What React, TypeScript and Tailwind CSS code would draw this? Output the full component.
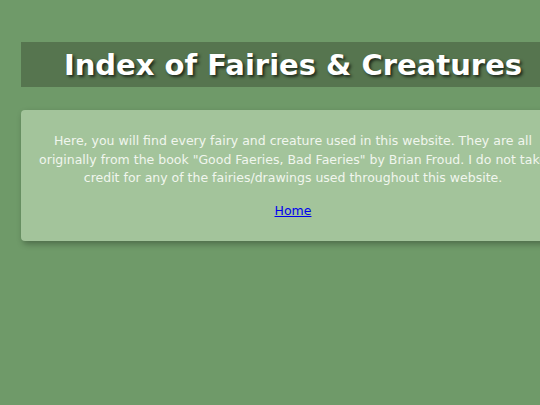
export default function App() {
  return (
    <div className="min-h-[405px] w-full overflow-hidden bg-[#6f9a69] pt-[42px] pl-[21px] font-['Comic_Sans_MS','DejaVu_Sans',sans-serif]">
      {/* Header */}
      <div className="flex h-[45px] w-[544px] items-center justify-center bg-[#56754f]">
        <h1 className="whitespace-nowrap pt-[2px] text-[29px] font-bold text-white [text-shadow:2px_2px_3px_#1f2a1c]">
          Index of Fairies &amp; Creatures
        </h1>
      </div>

      {/* Card */}
      <div className="mt-[23px] h-[131px] w-[544px] rounded-[4px] bg-[#a3c49b] px-[15px] pt-[22px] text-center text-[12.5px] leading-[18.5px] text-[#f1f6ee] shadow-[2px_3px_6px_rgba(0,0,0,0.3)]">
        <p className="whitespace-nowrap">
          Here, you will find every fairy and creature used in this website. They are all
          <br />
          originally from the book "Good Faeries, Bad Faeries" by Brian Froud. I do not take
          <br />
          credit for any of the fairies/drawings used throughout this website.
        </p>
        <p className="mt-[14px]">
          <a href="#" className="text-[#0000ee] underline">
            Home
          </a>
        </p>
      </div>
    </div>
  );
}
